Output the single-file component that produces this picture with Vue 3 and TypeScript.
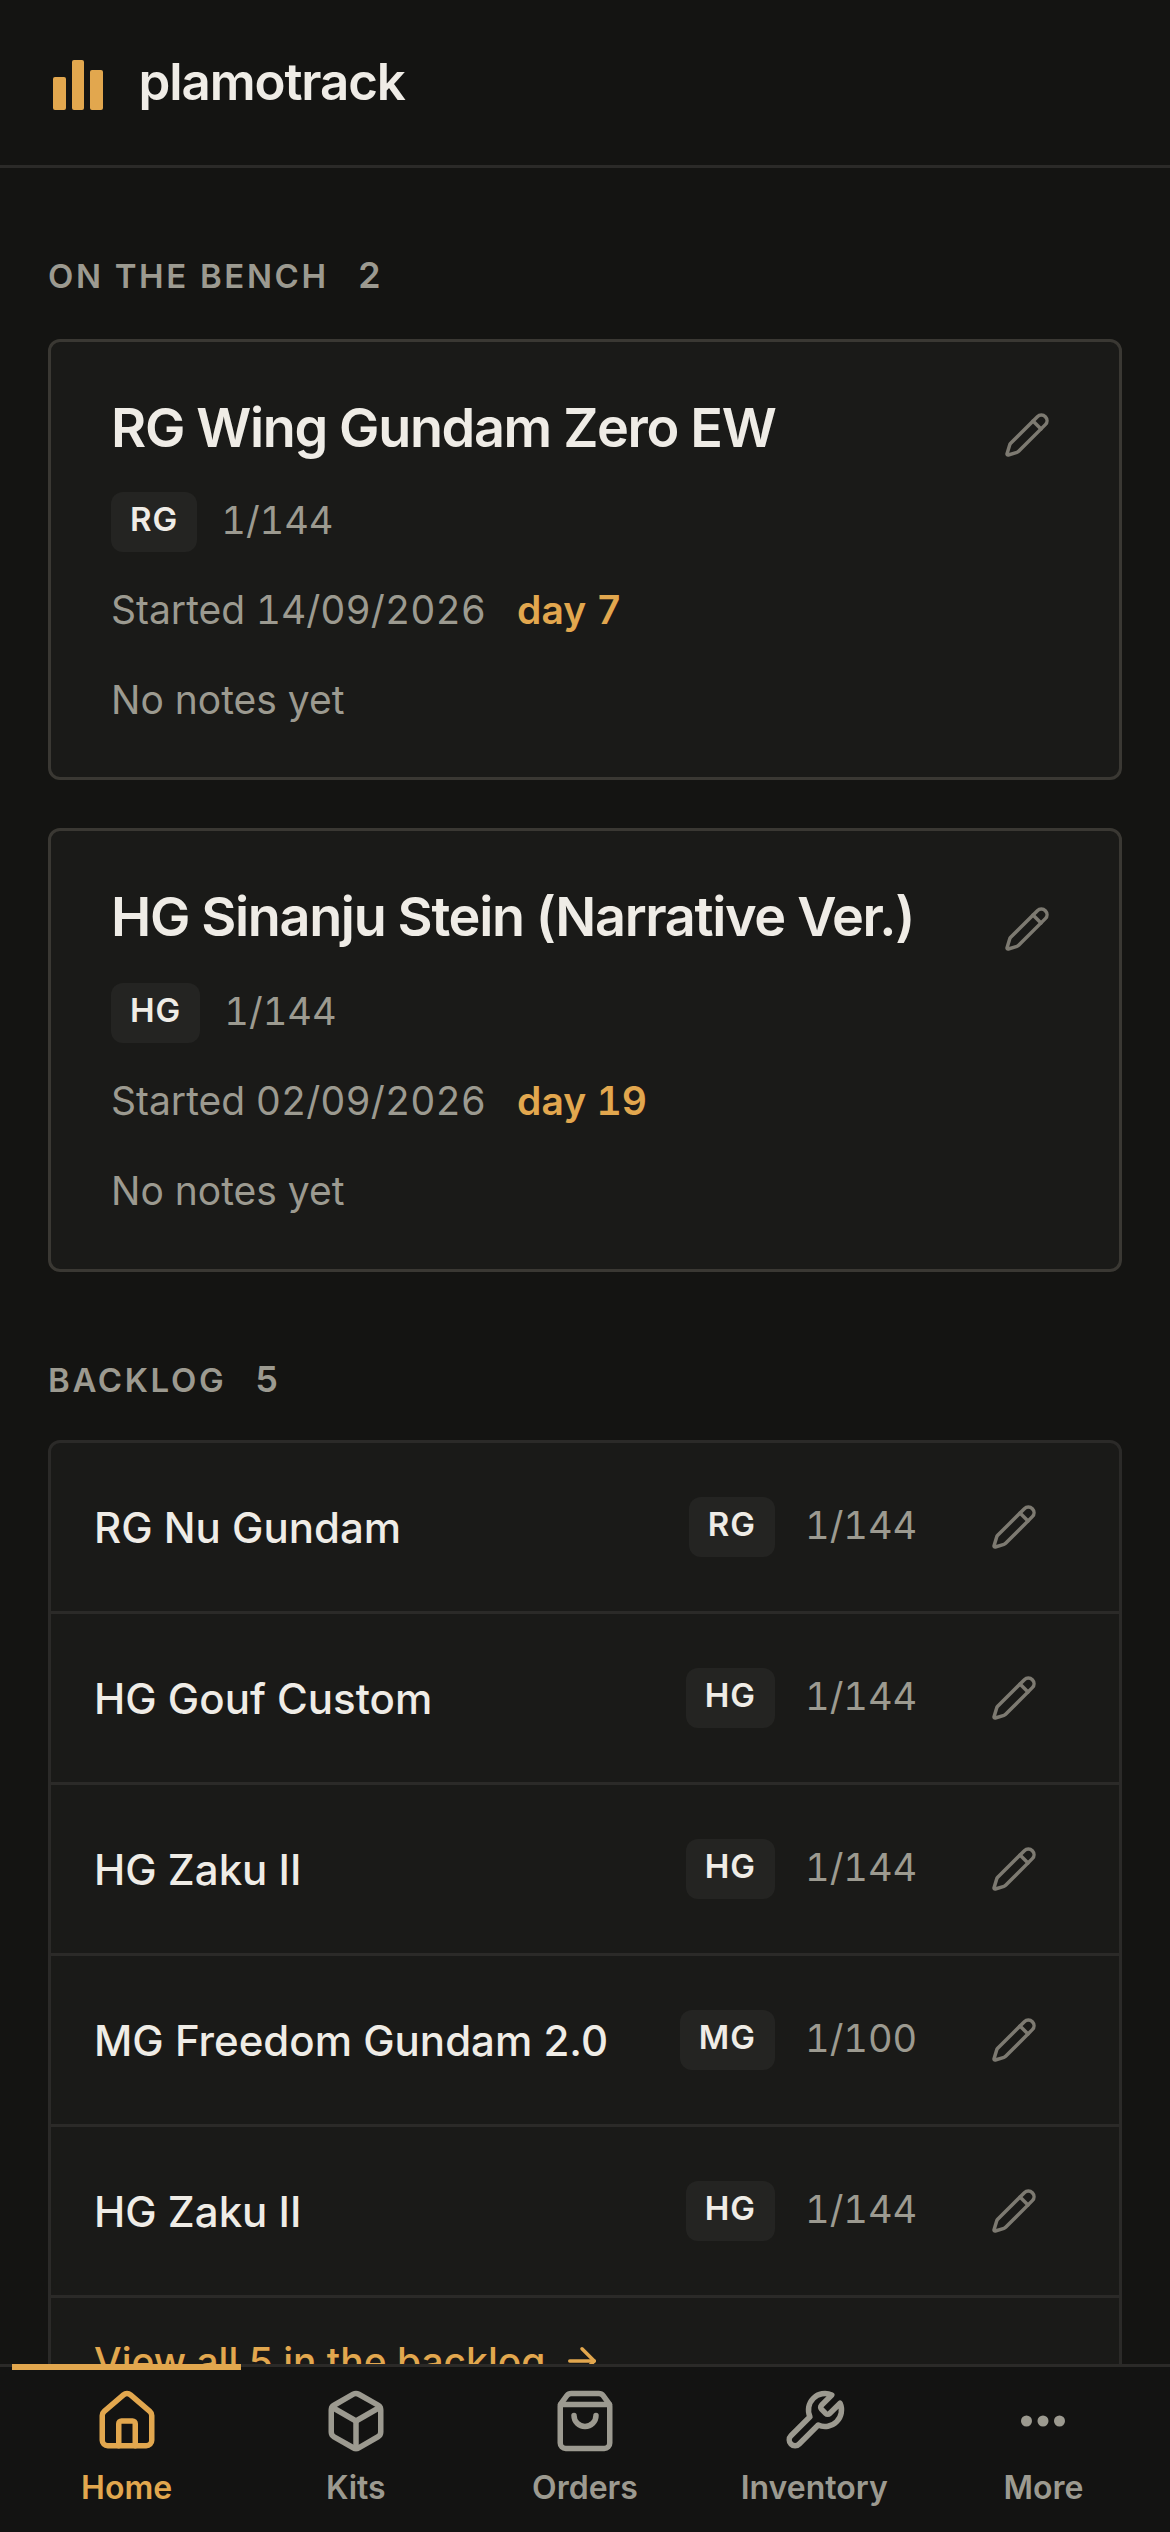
<script setup lang="ts">
interface BenchKit {
  name: string;
  grade: string;
  scale: string;
  started: string;
  day: number;
}

interface BacklogKit {
  name: string;
  grade: string;
  scale: string;
}

const bench: BenchKit[] = [
  { name: 'RG Wing Gundam Zero EW', grade: 'RG', scale: '1/144', started: '14/09/2026', day: 7 },
  { name: 'HG Sinanju Stein (Narrative Ver.)', grade: 'HG', scale: '1/144', started: '02/09/2026', day: 19 },
];

const backlog: BacklogKit[] = [
  { name: 'RG Nu Gundam', grade: 'RG', scale: '1/144' },
  { name: 'HG Gouf Custom', grade: 'HG', scale: '1/144' },
  { name: 'HG Zaku II', grade: 'HG', scale: '1/144' },
  { name: 'MG Freedom Gundam 2.0', grade: 'MG', scale: '1/100' },
  { name: 'HG Zaku II', grade: 'HG', scale: '1/144' },
];

const pencilPath =
  'M21.174 6.812a1 1 0 0 0-3.986-3.987L3.842 16.174a2 2 0 0 0-.5.83l-1.321 4.352a.5.5 0 0 0 .623.622l4.353-1.32a2 2 0 0 0 .83-.497z';

const tabs = [
  {
    label: 'Home',
    active: true,
    paths: [
      'M15 21v-8a1 1 0 0 0-1-1h-4a1 1 0 0 0-1 1v8',
      'M3 10a2 2 0 0 1 .709-1.528l7-5.999a2 2 0 0 1 2.582 0l7 5.999A2 2 0 0 1 21 10v9a2 2 0 0 1-2 2H5a2 2 0 0 1-2-2z',
    ],
  },
  {
    label: 'Kits',
    active: false,
    paths: [
      'M21 8a2 2 0 0 0-1-1.73l-7-4a2 2 0 0 0-2 0l-7 4A2 2 0 0 0 3 8v8a2 2 0 0 0 1 1.73l7 4a2 2 0 0 0 2 0l7-4A2 2 0 0 0 21 16Z',
      'm3.3 7 8.7 5 8.7-5',
      'M12 22V12',
    ],
  },
  {
    label: 'Orders',
    active: false,
    paths: [
      'M16 10a4 4 0 0 1-8 0',
      'M3.103 6.034h17.794',
      'M3.4 5.467a2 2 0 0 0-.4 1.2V20a2 2 0 0 0 2 2h14a2 2 0 0 0 2-2V6.667a2 2 0 0 0-.4-1.2l-2-2.667A2 2 0 0 0 17 2H7a2 2 0 0 0-1.6.8z',
    ],
  },
  {
    label: 'Inventory',
    active: false,
    paths: [
      'M14.7 6.3a1 1 0 0 0 0 1.4l1.6 1.6a1 1 0 0 0 1.4 0l3.77-3.77a6 6 0 0 1-7.94 7.94l-6.91 6.91a2.12 2.12 0 0 1-3-3l6.91-6.91a6 6 0 0 1 7.94-7.94l-3.76 3.76z',
    ],
  },
  {
    label: 'More',
    active: false,
    paths: [
      'M5 12a1 1 0 1 0 2 0a1 1 0 1 0-2 0',
      'M11 12a1 1 0 1 0 2 0a1 1 0 1 0-2 0',
      'M17 12a1 1 0 1 0 2 0a1 1 0 1 0-2 0',
    ],
  },
];
</script>

<template>
  <div class="app">
    <header class="topbar">
      <div class="logo">
        <span class="logo-bar short"></span>
        <span class="logo-bar tall"></span>
        <span class="logo-bar mid"></span>
      </div>
      <span class="brand">plamotrack</span>
    </header>

    <main class="content">
      <section class="section">
        <h2 class="section-label">ON THE BENCH <span class="count">2</span></h2>
        <div class="bench">
          <article v-for="kit in bench" :key="kit.name" class="bench-card">
            <div class="bench-head">
              <h3 class="bench-title">{{ kit.name }}</h3>
              <svg class="pencil bench-pencil" viewBox="0 0 24 24">
                <path :d="pencilPath" />
                <path d="m15 5 4 4" />
              </svg>
            </div>
            <div class="bench-meta">
              <span class="grade">{{ kit.grade }}</span>
              <span class="scale">{{ kit.scale }}</span>
            </div>
            <div class="bench-started">
              <span>Started {{ kit.started }}</span>
              <span class="day">day {{ kit.day }}</span>
            </div>
            <p class="bench-notes">No notes yet</p>
          </article>
        </div>
      </section>

      <section class="section backlog-section">
        <h2 class="section-label">BACKLOG <span class="count">5</span></h2>
        <div class="backlog">
          <div v-for="(kit, i) in backlog" :key="i" class="backlog-row">
            <span class="backlog-name">{{ kit.name }}</span>
            <span class="grade">{{ kit.grade }}</span>
            <span class="scale">{{ kit.scale }}</span>
            <svg class="pencil row-pencil" viewBox="0 0 24 24">
              <path :d="pencilPath" />
              <path d="m15 5 4 4" />
            </svg>
          </div>
          <div class="view-all">
            <span>View all 5 in the backlog</span>
            <svg class="arrow" viewBox="0 0 24 24">
              <path d="M5 12h14" />
              <path d="m12 5 7 7-7 7" />
            </svg>
          </div>
        </div>
      </section>
    </main>

    <nav class="tabbar">
      <div v-for="tab in tabs" :key="tab.label" class="tab" :class="{ active: tab.active }">
        <svg class="tab-icon" viewBox="0 0 24 24">
          <path v-for="d in tab.paths" :key="d" :d="d" />
        </svg>
        <span class="tab-label">{{ tab.label }}</span>
      </div>
    </nav>
  </div>
</template>

<style scoped>
.app {
  position: relative;
  height: 2532px;
  overflow: hidden;
  background: #141412;
  color: #efece6;
  font-family: Inter, 'Liberation Sans', sans-serif;
}

.topbar {
  display: flex;
  align-items: center;
  gap: 36px;
  height: 168px;
  box-sizing: border-box;
  padding: 0 53px 3px;
  border-bottom: 3px solid #2b2a28;
}

.logo {
  display: flex;
  align-items: flex-end;
  gap: 6px;
  height: 50px;
  margin-top: 7px;
}

.logo-bar {
  width: 12.5px;
  border-radius: 2px;
  background: #e2a74e;
}

.short {
  height: 33px;
}

.tall {
  height: 50px;
}

.mid {
  height: 40px;
}

.brand {
  font-size: 51px;
  font-weight: 600;
  letter-spacing: -1.1px;
  color: #efece6;
}

.content {
  padding: 84px 48px 0;
}

.section-label {
  margin: 0 0 39px;
  font-size: 33px;
  line-height: 48px;
  font-weight: 600;
  letter-spacing: 2.64px;
  color: #9c9a90;
}

.count {
  margin-left: 18px;
  font-size: 36px;
  line-height: 1;
  letter-spacing: 0;
  font-variant-numeric: tabular-nums;
}

.bench {
  display: flex;
  flex-direction: column;
  gap: 48px;
}

.bench-card {
  box-sizing: border-box;
  padding: 53px 60px 50px;
  border: 3px solid #3a3833;
  border-radius: 12px;
  background: #1a1a18;
}

.bench-card:last-child {
  padding-bottom: 51px;
}

.bench-card:last-child .bench-meta {
  margin-top: 33px;
}

.bench-card:last-child .bench-pencil {
  margin-top: 24px;
}

.bench-head {
  display: flex;
  justify-content: space-between;
  align-items: center;
  height: 66px;
  padding-right: 8px;
}

.bench-title {
  margin: 0;
  font-size: 54px;
  line-height: 66px;
  font-weight: 600;
  letter-spacing: -1.35px;
  color: #efece6;
}

.bench-pencil {
  margin-top: 14px;
}

.bench-meta {
  display: flex;
  align-items: center;
  gap: 24px;
  margin-top: 31px;
}

.grade {
  box-sizing: border-box;
  height: 60px;
  padding: 0 19px;
  border-radius: 12px;
  background: #242422;
  font-size: 33px;
  line-height: 54px;
  font-weight: 600;
  letter-spacing: 1px;
  color: #efece6;
}

.scale {
  margin-bottom: 4px;
  font-size: 38px;
  line-height: 54px;
  font-variant-numeric: tabular-nums;
  color: #9c9a90;
}

.bench-started {
  display: flex;
  gap: 31px;
  margin-top: 31px;
  font-size: 39px;
  line-height: 54px;
  font-variant-numeric: tabular-nums;
  color: #9c9a90;
}

.day {
  font-weight: 600;
  color: #e2a74e;
}

.bench-notes {
  margin: 36px 0 0;
  font-size: 39px;
  line-height: 54px;
  color: #9c9a90;
}

.backlog-section {
  margin-top: 84px;
}

.backlog-section .section-label {
  margin-bottom: 36px;
}

.backlog {
  border: 3px solid #2b2a28;
  border-radius: 12px;
  background: #1a1a18;
}

.backlog-row {
  display: grid;
  grid-template-columns: 1fr auto 110px 93px;
  align-items: center;
  column-gap: 30px;
  height: 171px;
  box-sizing: border-box;
  padding: 0 81px 0 43px;
  border-bottom: 3px solid #2b2a28;
}

.backlog-name {
  font-size: 42px;
  font-weight: 500;
  color: #efece6;
}

.pencil {
  width: 48px;
  height: 48px;
  fill: none;
  stroke: #7d7a71;
  stroke-width: 1.75;
  stroke-linecap: round;
  stroke-linejoin: round;
}

.row-pencil {
  justify-self: end;
}

.view-all {
  display: flex;
  align-items: center;
  gap: 16px;
  height: 126px;
  padding-left: 43px;
  font-size: 39px;
  font-weight: 500;
  color: #e2a74e;
}

.arrow {
  width: 42px;
  height: 42px;
  fill: none;
  stroke: #e2a74e;
  stroke-width: 2;
  stroke-linecap: round;
  stroke-linejoin: round;
}

.tabbar {
  position: absolute;
  left: 0;
  right: 0;
  bottom: 0;
  display: grid;
  grid-template-columns: repeat(5, 1fr);
  height: 168px;
  box-sizing: border-box;
  padding: 21px 12px 0;
  border-top: 3px solid #2b2a28;
  background: #131312;
}

.tab {
  position: relative;
  display: flex;
  flex-direction: column;
  align-items: center;
  color: #9c9a90;
}

.tab.active {
  color: #e2a74e;
}

.tab.active::before {
  content: '';
  position: absolute;
  top: -24px;
  left: 0;
  right: 0;
  height: 6px;
  background: #e2a74e;
}

.tab-icon {
  width: 66px;
  height: 66px;
  fill: none;
  stroke: currentColor;
  stroke-width: 2;
  stroke-linecap: round;
  stroke-linejoin: round;
}

.tab-label {
  margin-top: 14px;
  font-size: 32px;
  line-height: 40px;
  font-weight: 600;
}
</style>

<style>
body {
  background: #141412;
}
</style>
